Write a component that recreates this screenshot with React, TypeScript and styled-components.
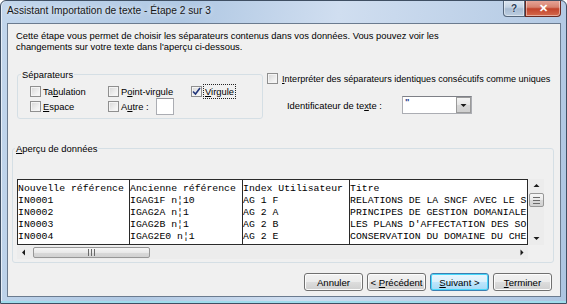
import React from 'react';
import styled, { createGlobalStyle } from 'styled-components';

const GlobalStyle = createGlobalStyle`
  html, body {
    margin: 0;
    padding: 0;
    background: #ffffff;
  }
  body {
    font-family: "Liberation Sans", Arial, sans-serif;
    font-size: 9.4px;
    color: #000;
  }
`;

const Window = styled.div`
  box-sizing: border-box;
  width: 567px;
  height: 304px;
  display: flex;
  flex-direction: column;
  padding: 0 5px 6px 6px;
  border: 1px solid #3f4f63;
  border-radius: 6px 6px 0 0;
  background: linear-gradient(100deg, #c2d6ec 0%, #b0c8e3 30%, #d0def0 55%, #adc5e1 100%);
  box-shadow: inset 0 -2px 0 #9fdcec, inset 1px 0 0 #e6eef8;
  overflow: hidden;
`;

const TitleBar = styled.div`
  height: 22px;
  display: flex;
  align-items: flex-start;
  justify-content: space-between;
`;

const Title = styled.span`
  padding-top: 4px;
  font-size: 10.2px;
  color: #161616;
  text-shadow: 0 0 5px rgba(255, 255, 255, 0.9);
`;

const CaptionButtons = styled.div`
  display: flex;
  margin-top: -1px;
`;

const CaptionButton = styled.div<{ $close?: boolean }>`
  box-sizing: border-box;
  width: ${p => (p.$close ? 36 : 22)}px;
  height: 17px;
  display: flex;
  align-items: center;
  justify-content: center;
  border: 1px solid ${p => (p.$close ? '#6b2a22' : '#54657a')};
  border-top: none;
  border-radius: ${p => (p.$close ? '0 0 4px 0' : '0 0 0 4px')};
  background: ${p =>
    p.$close
      ? 'linear-gradient(#e8a89c 0%, #d7826f 45%, #c2432c 55%, #d56a4c 100%)'
      : 'linear-gradient(#dfe8f2 0%, #c3d2e3 45%, #a8bbd2 55%, #bccde0 100%)'};
  color: #fff;
  font-weight: bold;
  font-size: 11px;
  box-shadow: inset 0 0 0 1px rgba(255, 255, 255, 0.45);
`;

const HelpGlyph = styled.span`
  color: #2b3d55;
  font-size: 10px;
  font-weight: bold;
  text-shadow: 0 0 2px #fff;
`;

const Client = styled.div`
  flex: 1;
  display: flex;
  flex-direction: column;
  border: 1px solid #6b7b8f;
  background: #f0f0f0;
`;

const Intro = styled.p`
  margin: 0;
  padding: 6px 8px 0 8px;
  height: 22px;
  line-height: 11px;
`;

const OptionsRow = styled.div`
  display: flex;
  gap: 4px;
  margin-top: 17px;
  padding-left: 9px;
`;

const GroupBox = styled.fieldset<{ $width?: number; $height: number }>`
  box-sizing: border-box;
  margin: 0;
  padding: 0;
  min-width: 0;
  width: ${p => (p.$width ? `${p.$width}px` : 'auto')};
  height: ${p => p.$height}px;
  border: 1px solid #d5dfe5;
  border-radius: 3px;
`;

const GroupLegend = styled.legend<{ $indent: number }>`
  padding: 0 1px;
  margin-left: ${p => p.$indent}px;
  line-height: 11px;
`;

const SepGrid = styled.div`
  display: grid;
  grid-template-columns: 78px 83px auto;
  grid-auto-rows: 15px;
  padding: 4px 0 0 12px;
`;

const Option = styled.label<{ $gap?: number }>`
  display: flex;
  align-items: center;
  gap: ${p => p.$gap ?? 2}px;
  white-space: nowrap;
`;

const Box = styled.span`
  box-sizing: border-box;
  flex: none;
  width: 11px;
  height: 11px;
  display: flex;
  align-items: center;
  justify-content: center;
  border: 1px solid #8f8f8f;
  background: linear-gradient(135deg, #d6d6d6 0%, #eeeeee 60%, #fbfbfb 100%);
  box-shadow: inset 0 0 0 1px #f4f4f4;
`;

const FocusLabel = styled.span`
  margin-left: -1px;
  padding: 0 1px;
  line-height: 13px;
  border: 1px dotted #222;
`;

const SmallInput = styled.span`
  box-sizing: border-box;
  width: 18px;
  height: 17px;
  margin-left: 5px;
  background: #fff;
  border: 1px solid #abadb3;
  border-top-color: #8f9096;
`;

const SideOptions = styled.div`
  display: flex;
  flex-direction: column;
  padding-top: 4px;
`;

const LongLabel = styled.span`
  font-size: 9.1px;
`;

const QualifierRow = styled.div`
  display: flex;
  align-items: center;
  margin-top: 12px;
  padding-left: 20px;
  height: 18px;
`;

const QualifierLabel = styled.span`
  width: 115px;
`;

const Combo = styled.div`
  box-sizing: border-box;
  width: 70px;
  height: 18px;
  display: flex;
  background: #fff;
  border: 1px solid #abadb3;
  border-top-color: #7e8087;
`;

const ComboValue = styled.span`
  flex: 1;
  padding-left: 2px;
  line-height: 9px;
  color: #1d3b8a;
  font-weight: bold;
`;

const ComboButton = styled.span`
  box-sizing: border-box;
  width: 15px;
  display: flex;
  align-items: center;
  justify-content: center;
  border: 1px solid #9a9a9a;
  background: linear-gradient(#f4f4f4 0%, #e6e6e6 50%, #d6d6d6 51%, #cfcfcf 100%);
`;

const PreviewWrap = styled.div`
  margin: 24px 6px 0 4px;
`;

const PreviewGrid = styled.div`
  display: grid;
  grid-template-columns: 511px 15px;
  grid-template-rows: 66px 14px;
  column-gap: 1px;
  padding: 25px 0 0 4px;
`;

const DataTable = styled.div`
  box-sizing: border-box;
  display: flex;
  border: 1px solid #2a2a2a;
  background: #fff;
  overflow: hidden;
  font-family: "Liberation Mono", "Courier New", monospace;
  font-size: 9.8px;
  line-height: 12px;
`;

const DataColumn = styled.div<{ $width?: number }>`
  box-sizing: content-box;
  flex: ${p => (p.$width ? 'none' : '1')};
  width: ${p => (p.$width ? `${p.$width}px` : 'auto')};
  padding-top: 3px;
  border-right: ${p => (p.$width ? '1px solid #2a2a2a' : 'none')};
  white-space: nowrap;
  overflow: hidden;
`;

const VScroll = styled.div`
  display: flex;
  flex-direction: column;
  align-items: stretch;
  background: #ececec;
`;

const HScroll = styled.div`
  display: flex;
  align-items: center;
  background: #ececec;
  margin-top: 1px;
`;

const Arrow = styled.span<{ $size: number }>`
  flex: none;
  width: ${p => p.$size}px;
  height: ${p => p.$size}px;
  display: flex;
  align-items: center;
  justify-content: center;
`;

const Thumb = styled.span<{ $w: number; $h: number; $ml?: number }>`
  box-sizing: border-box;
  width: ${p => p.$w}px;
  height: ${p => p.$h}px;
  margin-left: ${p => p.$ml ?? 0}px;
  display: flex;
  align-items: center;
  justify-content: center;
  border: 1px solid #979797;
  border-radius: 2px;
  background: linear-gradient(${p => (p.$w > p.$h ? '180deg' : '90deg')}, #f6f6f6 0%, #e9e9e9 50%, #d9d9d9 51%, #d2d2d2 100%);
`;

const Spacer = styled.span`
  flex: 1;
`;

const ButtonRow = styled.div`
  display: flex;
  justify-content: flex-end;
  gap: 4px;
  margin-top: 10px;
  padding-right: 8px;
`;

const PushButton = styled.button<{ $focused?: boolean }>`
  box-sizing: border-box;
  width: 59px;
  height: 18px;
  padding: 0;
  font-family: "Liberation Sans", Arial, sans-serif;
  font-size: 9.6px;
  color: #000;
  border: 1px solid ${p => (p.$focused ? '#3c7fb1' : '#707070')};
  border-radius: 3px;
  background: ${p =>
    p.$focused
      ? 'linear-gradient(#eaf6fd 0%, #d9f0fc 50%, #bee6fd 51%, #a7d9f5 100%)'
      : 'linear-gradient(#f2f2f2 0%, #ebebeb 50%, #dddddd 51%, #cfcfcf 100%)'};
  box-shadow: inset 0 0 0 1px ${p => (p.$focused ? '#48d8fb' : '#fcfcfc')};
`;

const Check = () => (
  <svg width="9" height="9" viewBox="0 0 9 9">
    <path d="M1 4.5 L3.5 7 L8 1" fill="none" stroke="#21357a" strokeWidth="1.6" />
  </svg>
);

const Tri = ({ dir }: { dir: 'up' | 'down' | 'left' | 'right' }) => {
  const d = {
    up: 'M0.5 4 L3.5 1 L6.5 4 Z',
    down: 'M0.5 2 L3.5 5 L6.5 2 Z',
    left: 'M4 0.5 L1 3.5 L4 6.5 Z',
    right: 'M2.5 0.5 L5.5 3.5 L2.5 6.5 Z',
  }[dir];
  return (
    <svg width="7" height="7" viewBox="0 0 7 7">
      <path d={d} fill="#1a1a1a" />
    </svg>
  );
};

const Grip = ({ vertical }: { vertical?: boolean }) => (
  <svg width="7" height="7" viewBox="0 0 7 7">
    {[0, 3, 6].map(o =>
      vertical ? (
        <rect key={o} x="0" y={o} width="7" height="1" fill="#6a6a6a" />
      ) : (
        <rect key={o} x={o} y="0" width="1" height="7" fill="#6a6a6a" />
      ),
    )}
  </svg>
);

// only what shows inside the preview window
const columns = [
  { width: 111, cells: ['Nouvelle référence', 'IN0001', 'IN0002', 'IN0003', 'IN0004'] },
  { width: 112, cells: ['Ancienne référence', 'IGAG1F n¦10', 'IGAG2A n¦1', 'IGAG2B n¦1', 'IGAG2E0 n¦1'] },
  { width: 106, cells: ['Index Utilisateur', 'AG 1 F', 'AG 2 A', 'AG 2 B', 'AG 2 E'] },
  {
    width: 0,
    cells: [
      'Titre',
      'RELATIONS DE LA SNCF AVEC LE S',
      'PRINCIPES DE GESTION DOMANIALE',
      "LES PLANS D'AFFECTATION DES SO",
      'CONSERVATION DU DOMAINE DU CHE',
    ],
  },
];

export default function App() {
  return (
    <>
      <GlobalStyle />
      <Window>
        <TitleBar>
          <Title>Assistant Importation de texte - Étape 2 sur 3</Title>
          <CaptionButtons>
            <CaptionButton>
              <HelpGlyph>?</HelpGlyph>
            </CaptionButton>
            <CaptionButton $close>✕</CaptionButton>
          </CaptionButtons>
        </TitleBar>
        <Client>
          <Intro>
            Cette étape vous permet de choisir les séparateurs contenus dans vos données. Vous pouvez voir les
            <br />
            changements sur votre texte dans l'aperçu ci-dessous.
          </Intro>

          <OptionsRow>
            <GroupBox $width={246} $height={50}>
              <GroupLegend $indent={3}>Séparateurs</GroupLegend>
              <SepGrid>
                <Option>
                  <Box />
                  <span>
                    Ta<u>b</u>ulation
                  </span>
                </Option>
                <Option>
                  <Box />
                  <span>
                    P<u>o</u>int-virgule
                  </span>
                </Option>
                <Option>
                  <Box>
                    <Check />
                  </Box>
                  <FocusLabel>
                    <u>V</u>irgule
                  </FocusLabel>
                </Option>
                <Option>
                  <Box />
                  <span>
                    <u>E</u>space
                  </span>
                </Option>
                <Option>
                  <Box />
                  <span>
                    A<u>u</u>tre :
                  </span>
                  <SmallInput />
                </Option>
              </SepGrid>
            </GroupBox>

            <SideOptions>
              <Option $gap={4}>
                <Box />
                <LongLabel>
                  <u>I</u>nterpréter des séparateurs identiques consécutifs comme uniques
                </LongLabel>
              </Option>
              <QualifierRow>
                <QualifierLabel>
                  Identificateur de te<u>x</u>te :
                </QualifierLabel>
                <Combo>
                  <ComboValue>"</ComboValue>
                  <ComboButton>
                    <Tri dir="down" />
                  </ComboButton>
                </Combo>
              </QualifierRow>
            </SideOptions>
          </OptionsRow>

          <PreviewWrap>
            <GroupBox $height={120}>
              <GroupLegend $indent={2}>
                <u>A</u>perçu de données
              </GroupLegend>
              <PreviewGrid>
                <DataTable>
                  {columns.map((col, i) => (
                    <DataColumn key={i} $width={col.width || undefined}>
                      {col.cells.map((c, j) => (
                        <div key={j}>{c}</div>
                      ))}
                    </DataColumn>
                  ))}
                </DataTable>
                <VScroll>
                  <Arrow $size={14}>
                    <Tri dir="up" />
                  </Arrow>
                  <Thumb $w={15} $h={14}>
                    <Grip vertical />
                  </Thumb>
                  <Spacer />
                  <Arrow $size={14}>
                    <Tri dir="down" />
                  </Arrow>
                </VScroll>
                <HScroll>
                  <Arrow $size={14}>
                    <Tri dir="left" />
                  </Arrow>
                  <Thumb $w={117} $h={11} $ml={2}>
                    <Grip />
                  </Thumb>
                  <Spacer />
                  <Arrow $size={14}>
                    <Tri dir="right" />
                  </Arrow>
                </HScroll>
              </PreviewGrid>
            </GroupBox>
          </PreviewWrap>

          <ButtonRow>
            <PushButton>Annuler</PushButton>
            <PushButton>
              &lt; <u>P</u>récédent
            </PushButton>
            <PushButton $focused>
              <u>S</u>uivant &gt;
            </PushButton>
            <PushButton>
              <u>T</u>erminer
            </PushButton>
          </ButtonRow>
        </Client>
      </Window>
    </>
  );
}
